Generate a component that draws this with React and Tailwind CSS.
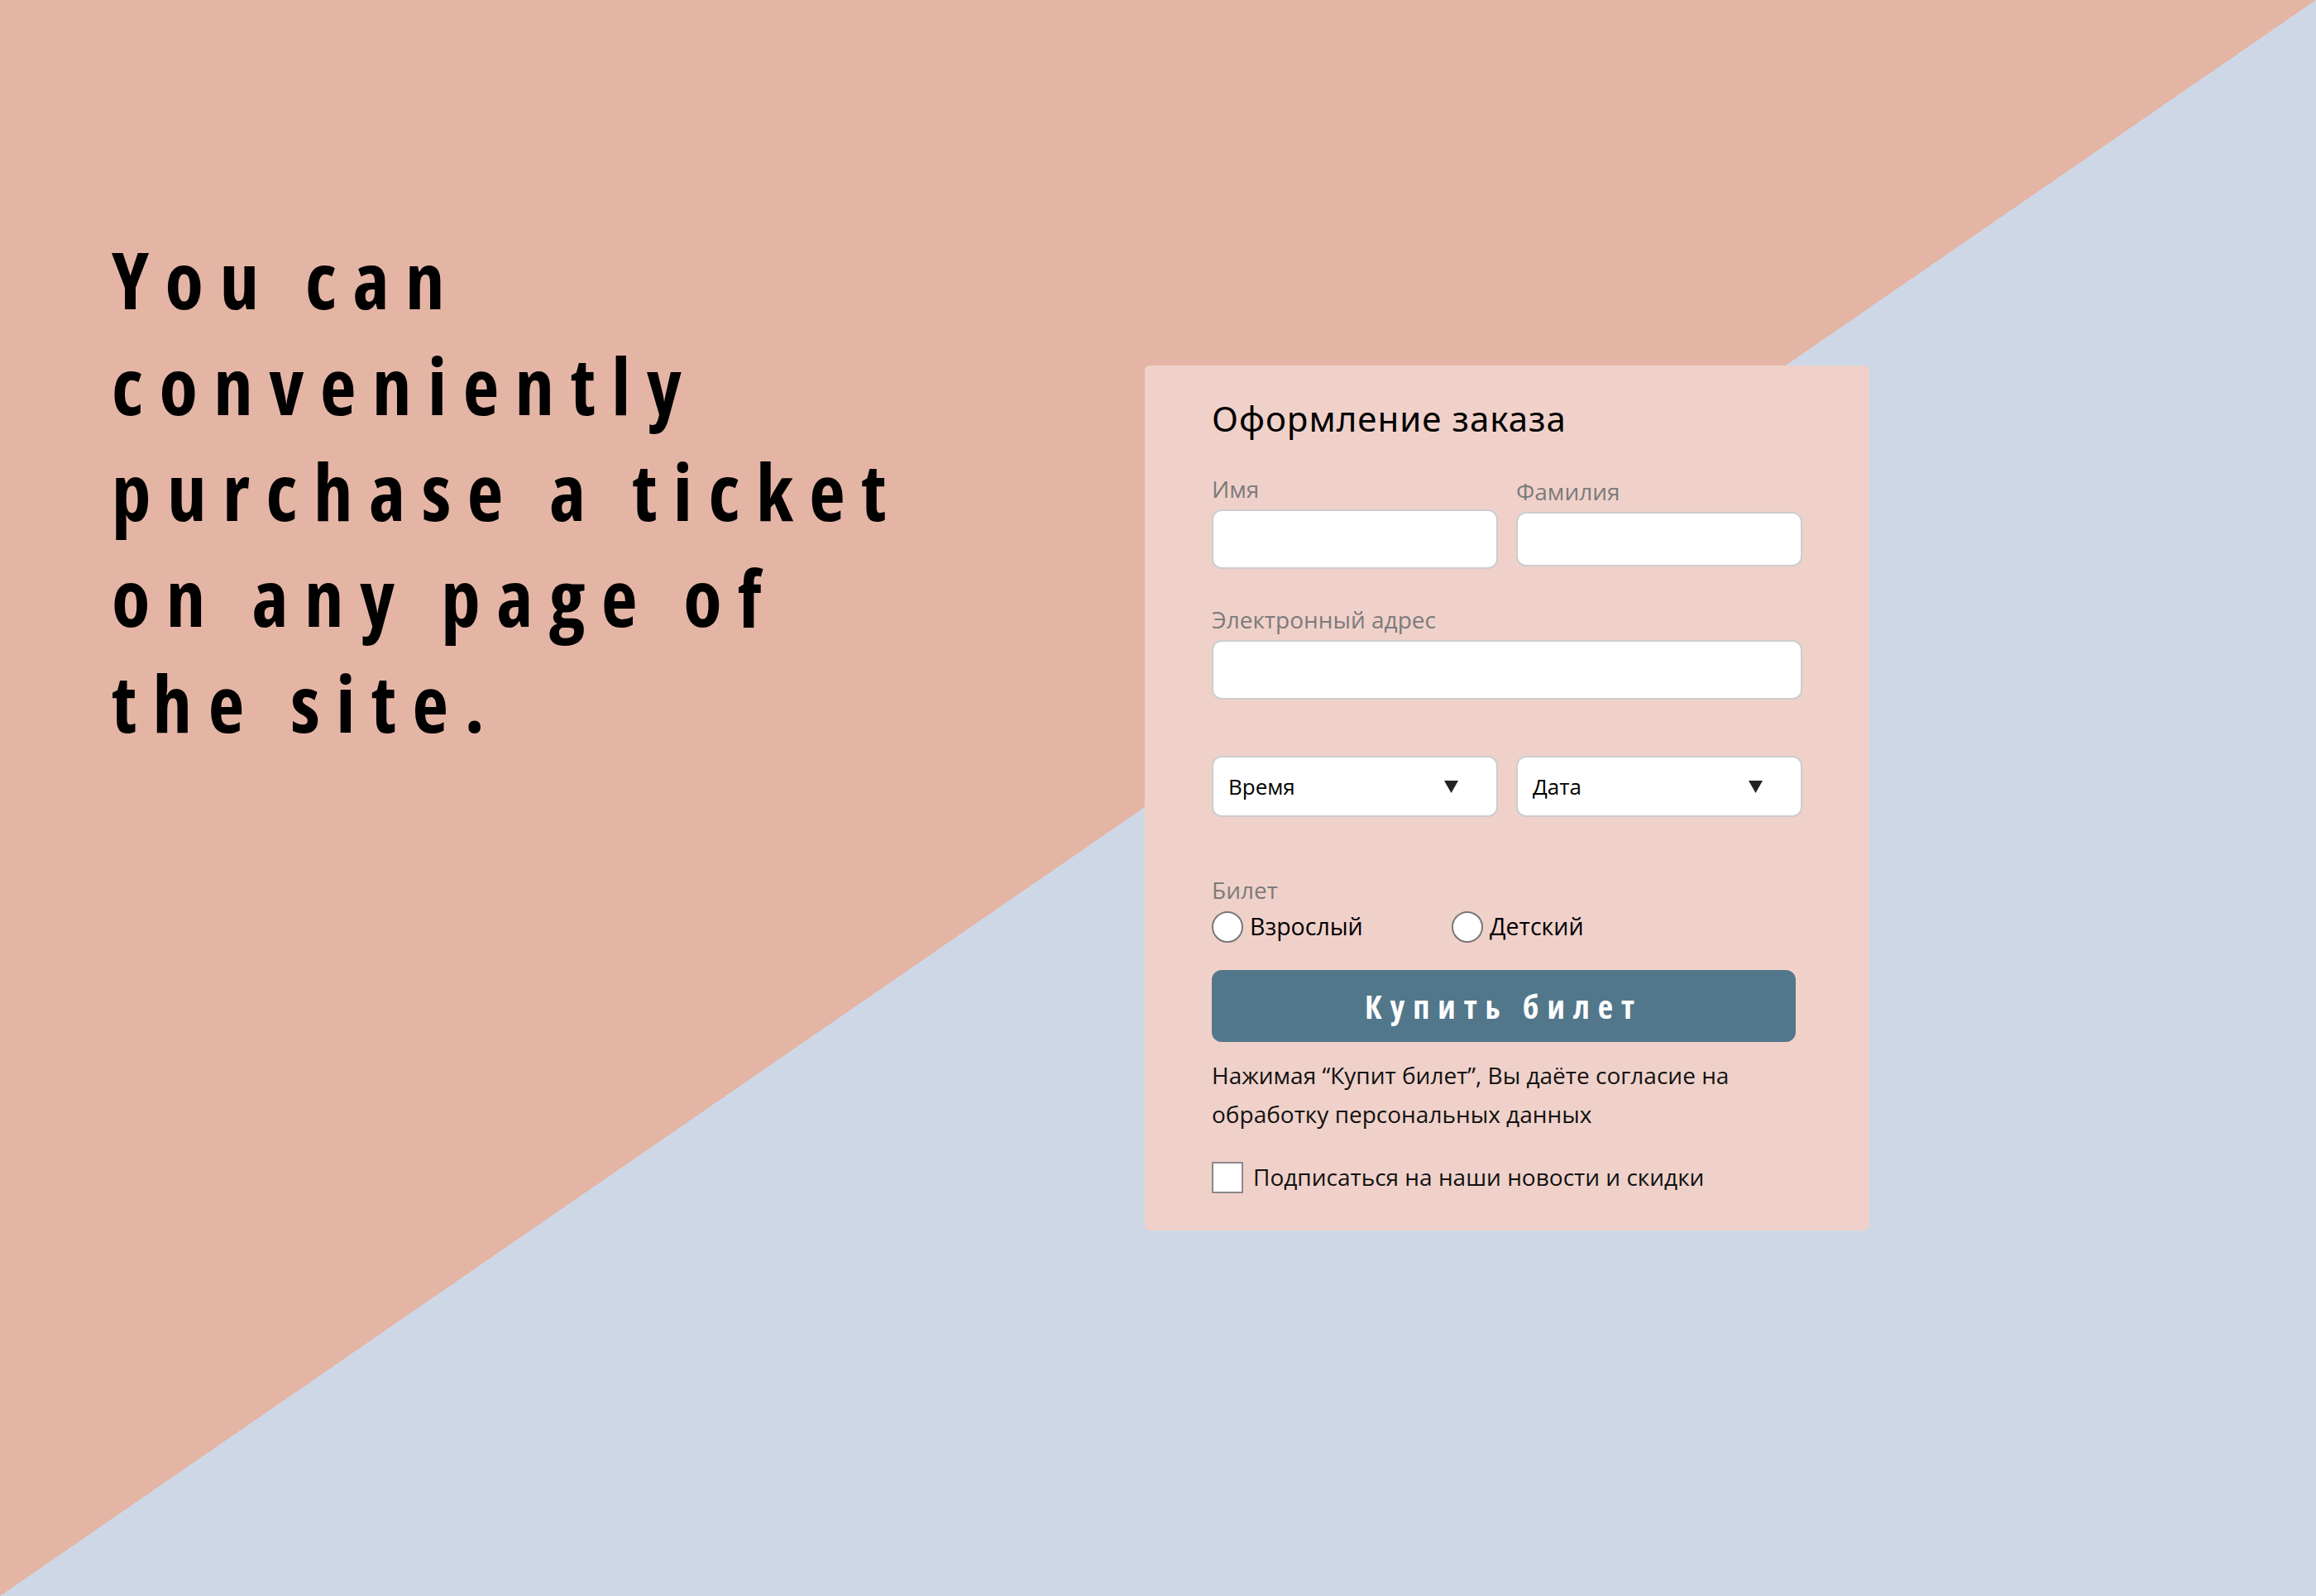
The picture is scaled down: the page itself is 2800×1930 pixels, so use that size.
import { useState } from 'react';

function Field({ label, className = '', inputClass = 'h-[72px]' }) {
  return (
    <label className={`flex flex-col ${className}`}>
      <span className="h-[36px] text-[28px] leading-[36px] text-[#7b7b7b]">{label}</span>
      <input
        type="text"
        className={`mt-[7px] w-full rounded-[12px] border-2 border-[#cdcdcd] bg-white px-4 text-[26px] outline-none ${inputClass}`}
      />
    </label>
  );
}

function Dropdown({ label }) {
  return (
    <button
      type="button"
      className="flex h-[74px] items-center justify-between rounded-[12px] border-2 border-[#cdcdcd] bg-white pl-[18px] pr-[46px] text-[26px] text-black"
    >
      <span>{label}</span>
      <svg width="17" height="15" viewBox="0 0 17 15">
        <path d="M0 0H17L8.5 15Z" fill="#222" />
      </svg>
    </button>
  );
}

function Radio({ name, label, checked, onChange, className = '' }) {
  return (
    <label className={`flex items-center gap-[8px] ${className}`}>
      <span
        onClick={onChange}
        className={`h-[38px] w-[38px] shrink-0 rounded-full border-2 border-[#777] ${checked ? 'bg-[#52778b]' : 'bg-white'}`}
      />
      <input type="radio" name={name} className="hidden" checked={checked} onChange={onChange} />
      <span className="text-[28.5px] leading-[39px] text-black">{label}</span>
    </label>
  );
}

export default function App() {
  const [ticket, setTicket] = useState(null);
  const [subscribe, setSubscribe] = useState(false);

  return (
    <main className="flex h-[1930px] w-full overflow-hidden bg-[linear-gradient(to_bottom_right,#e4b5a5_50%,#ced7e6_50%)] font-['Open_Sans',sans-serif]">
      {/* Left headline */}
      <section className="w-[1384px] shrink-0 pl-[135px] pt-[273px]">
        <h1 className="text-[95px] font-bold leading-[128px] tracking-[19.5px] text-black [font-stretch:75%]">
          You can
          <br />
          conveniently
          <br />
          purchase a ticket
          <br />
          on any page of
          <br />
          the site.
        </h1>
      </section>

      {/* Order form */}
      <form className="mt-[442px] h-[1046px] w-[876px] shrink-0 rounded-md bg-[#f0d1ca] px-[81px] pt-[40px]">
        <h2 className="font-['Noto_Sans',sans-serif] text-[42px] leading-[48px] tracking-[1px] text-black">Оформление заказа</h2>

        <div className="mt-[43px] grid grid-cols-2 gap-x-[22px]">
          <Field label="Имя" />
          <Field label="Фамилия" className="pt-[3px]" inputClass="h-[66px]" />
        </div>

        <Field label="Электронный адрес" className="mt-[43px]" />

        <div className="mt-[68px] grid grid-cols-2 gap-x-[22px]">
          <Dropdown label="Время" />
          <Dropdown label="Дата" />
        </div>

        <div className="mt-[70px] h-[36px] text-[28px] leading-[36px] text-[#7b7b7b]">Билет</div>
        <div className="mt-[7px] flex h-[39px] items-center">
          <Radio name="ticket" label="Взрослый" className="w-[290px]" checked={ticket === 'adult'} onChange={() => setTicket('adult')} />
          <Radio name="ticket" label="Детский" checked={ticket === 'child'} onChange={() => setTicket('child')} />
        </div>

        <button
          type="button"
          className="mt-[33px] h-[87px] w-[706px] rounded-[12px] bg-[#52778b] text-[40px] font-bold tracking-[10px] text-white [font-stretch:75%]"
        >
          Купить билет
        </button>

        <p className="mt-[17px] text-[28px] leading-[47px] text-[#111]">
          Нажимая “Купит билет”, Вы даёте согласие на
          <br />
          обработку персональных данных
        </p>

        <label className="mt-[33px] flex h-[39px] items-center gap-[12px]">
          <span
            onClick={() => setSubscribe(!subscribe)}
            className={`h-[38px] w-[38px] shrink-0 border-2 border-[#8a8a8a] ${subscribe ? 'bg-[#52778b]' : 'bg-white'}`}
          />
          <span className="text-[28px] leading-[39px] text-[#111]">Подписаться на наши новости и скидки</span>
        </label>
      </form>
    </main>
  );
}
